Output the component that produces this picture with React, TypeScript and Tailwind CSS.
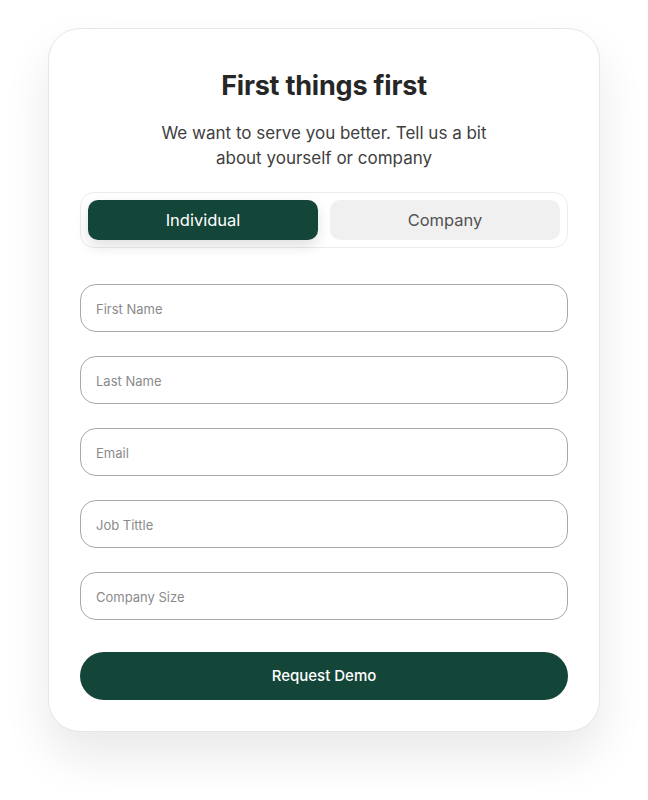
import React from "react";

const fields = ["First Name", "Last Name", "Email", "Job Tittle", "Company Size"];

export default function App() {
  return (
    <div className="min-h-[800px] w-full bg-white pt-[28px] font-['Inter',sans-serif]">
      <div className="ml-[48px] w-[552px] rounded-[32px] border border-[#e6e6e6] bg-white px-[31px] pb-[31px] pt-[40px] shadow-[0_24px_48px_rgba(0,0,0,0.09)]">
        <h1 className="text-center text-[27px] font-bold leading-[34px] tracking-[-0.2px] text-[#262626]">
          First things first
        </h1>
        <p className="mx-auto mt-[18px] w-[350px] text-center text-[17px] leading-[25px] text-[#404040]">
          We want to serve you better. Tell us a bit about yourself or company
        </p>
        <div className="mt-[21px] flex gap-[12px] rounded-[14px] border border-[#ebebeb] p-[7px]">
          <button className="h-[40px] flex-1 rounded-[10px] bg-[#134539] text-[16.5px] text-white shadow-[0_6px_14px_rgba(0,0,0,0.12)]">
            Individual
          </button>
          <button className="h-[40px] flex-1 rounded-[10px] bg-[#f0f0f0] text-[16.5px] text-[#525252]">
            Company
          </button>
        </div>
        <div className="mt-[36px] flex flex-col gap-[24px]">
          {fields.map((f) => (
            <input
              key={f}
              placeholder={f}
              className="h-[48px] w-full rounded-[16px] border border-[#a8a8a8] px-[15px] pt-[1px] text-[13px] text-[#333] outline-none placeholder:text-[#8a8a8a]"
            />
          ))}
        </div>
        <button className="mt-[32px] h-[48px] w-full rounded-full bg-[#134539] pt-[1px] text-[15px] font-medium text-white">
          Request Demo
        </button>
      </div>
    </div>
  );
}
